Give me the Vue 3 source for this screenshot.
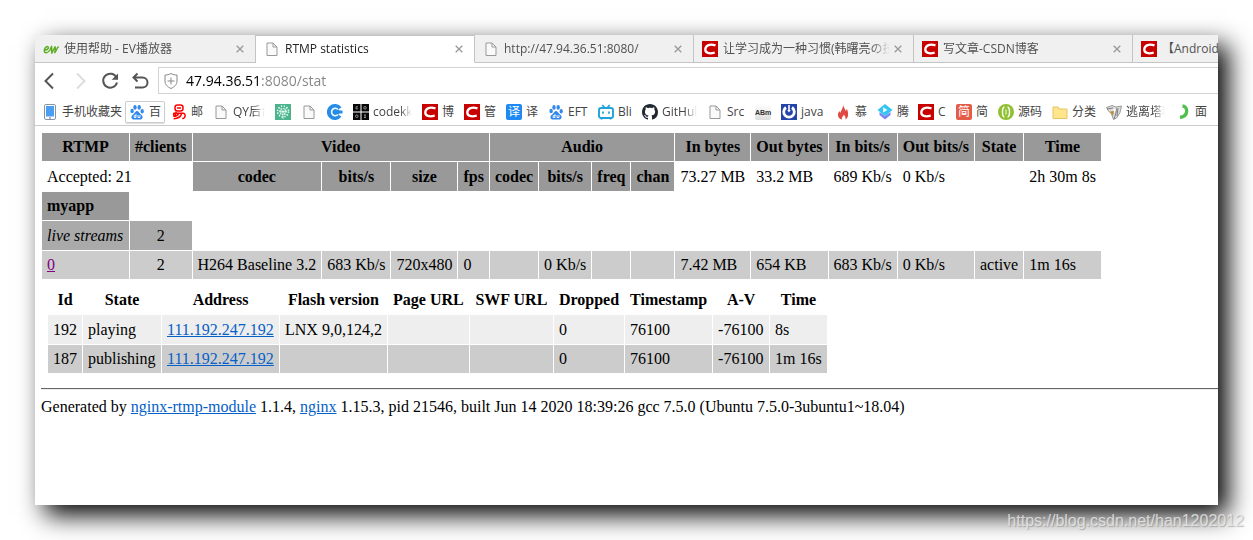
<script setup>
const tabs = [
  { icon: 'ev', title: '使用帮助 - EV播放器' },
  { icon: 'page', title: 'RTMP statistics', active: true },
  { icon: 'page', title: 'http://47.94.36.51:8080/' },
  { icon: 'csdn', title: '让学习成为一种习惯(韩曙亮の技术' },
  { icon: 'csdn', title: '写文章-CSDN博客' },
  { icon: 'csdn', title: '【Android 开发' },
]

const bookmarks = [
  { icon: 'phone', text: '手机收藏夹', width: 60 },
  { icon: 'paw', text: '百', width: 12, boxed: true },
  { icon: 'netease', text: '邮', width: 12 },
  { icon: 'page', text: 'QY后台', width: 32, fade: true },
  { icon: 'dandelion', label: 'Dandelion' },
  { icon: 'page', label: 'Page' },
  { icon: 'bluec', label: 'C' },
  { icon: 'codek', text: 'codekk', width: 39, fade: true },
  { icon: 'csdn', text: '博', width: 12 },
  { icon: 'csdn', text: '管', width: 12 },
  { tile: '译', kind: 'blue', text: '译', width: 12 },
  { icon: 'paw', text: 'EFT', width: 20 },
  { icon: 'bili', text: 'Bli', width: 14 },
  { icon: 'github', text: 'GitHub', width: 35, fade: true },
  { icon: 'page', text: 'Src', width: 18 },
  { tile: 'ABm', kind: 'grey' },
  { icon: 'java', text: 'java', width: 24 },
  { icon: 'fire', text: '慕', width: 12 },
  { icon: 'cloud', text: '腾', width: 11 },
  { icon: 'csdn', text: 'C', width: 8 },
  { tile: '简', kind: 'red', text: '简', width: 12 },
  { icon: 'source', text: '源码', width: 24 },
  { icon: 'folder', text: '分类', width: 24 },
  { icon: 'bird', text: '逃离塔科', width: 39, fade: true },
  { icon: 'hook', text: '面', width: 12 },
  { icon: 'block', label: 'More' },
]

const subHeads = ['codec', 'bits/s', 'size', 'fps', 'codec', 'bits/s', 'freq', 'chan']
const totals = ['73.27 MB', '33.2 MB', '689 Kb/s', '0 Kb/s', '', '2h 30m 8s']
const stream = ['H264 Baseline 3.2', '683 Kb/s', '720x480', '0', '', '0 Kb/s', '', '', '7.42 MB', '654 KB', '683 Kb/s', '0 Kb/s', 'active', '1m 16s']
const clientHeads = [
  { text: 'Id', width: 24 },
  { text: 'State', width: 68 },
  { text: 'Address', width: 107 },
  { text: 'Flash version', width: 96 },
  { text: 'Page URL', width: 71 },
  { text: 'SWF URL', width: 73 },
  { text: 'Dropped', width: 60 },
  { text: 'Timestamp', width: 77 },
  { text: 'A-V', width: 46 },
  { text: 'Time', width: 46 },
]
const clients = [
  { id: '192', state: 'playing', ip: '111.192.247.192', rest: ['LNX 9,0,124,2', '', '', '0', '76100', '-76100', '8s'] },
  { id: '187', state: 'publishing', ip: '111.192.247.192', rest: ['', '', '', '0', '76100', '-76100', '1m 16s'] },
]
</script>

<template>
  <svg class="defs" aria-hidden="true">
    <symbol id="ev" viewBox="0 0 16 16">
      <path d="M.7 9c3 .2 5-1.200 4.700-2.700C4.900 4.600 1.800 6 1.300 9.300c-.3 3.700 3.700 3 5.700-.3L8.600 5.300 8.800 12.300 12 5.700c.5 2 .3 4.400-.3 6C13.500 10 13.500 7 15.700 5.700" fill="none" stroke="#58ab1d" stroke-width="1.400" stroke-linejoin="round" />
    </symbol>
    <symbol id="page" viewBox="0 0 16 16">
      <path d="M3 2h6l4 4v8.500H3z" fill="#fafafa" stroke="#999" />
      <path d="M9 2v4h4" fill="none" stroke="#999" />
    </symbol>
    <symbol id="csdn" viewBox="0 0 16 16">
      <path d="M0 0h16v16H0z" fill="#c70000" />
      <path d="M13.500 4.400C8 2.600 3.700 4 3.300 8.200c-.3 4 4 4.800 9.400 3.500" fill="none" stroke="#fff" stroke-width="2.300" />
    </symbol>
    <symbol id="phone" viewBox="0 0 16 16">
      <rect x="2.500" y=".5" width="11" height="15" rx="1.500" fill="#fff" stroke="#8595a8" />
      <path d="M4 2h8v10.500H4z" fill="#4b9ff0" />
      <path d="M7 14h2" stroke="#667" />
    </symbol>
    <symbol id="paw" viewBox="0 0 16 16">
      <g fill="#3388ee">
        <ellipse cx="3.100" cy="7" rx="1.700" ry="2.300" />
        <ellipse cx="6" cy="3.400" rx="1.700" ry="2.400" />
        <ellipse cx="10.200" cy="3.400" rx="1.700" ry="2.400" />
        <ellipse cx="13.200" cy="7.200" rx="1.600" ry="2.300" />
        <path d="M8 7c1.500 0 2 1.500 3.200 2.700 1.500 1.300 2.800 2 2.300 4-.5 2.200-2.900 1.700-5.500 1.700s-5 .5-5.500-1.700c-.4-2 1-2.700 2.400-4C6.100 8.500 6.500 7 8 7z" />
      </g>
      <path d="M7 10v3.500H5.200v-1.800H7M9 11v2.500h2V11" fill="none" stroke="#fff" stroke-width=".9" />
    </symbol>
    <symbol id="netease" viewBox="0 0 16 16">
      <g fill="none" stroke="#f00" stroke-width="1.500">
        <rect x="4" y="1" width="8" height="6" rx="2.500" />
        <path d="M6 4h4M5 7.500v1.500M2.500 9.300h9.500c3.300 0 2.500 5.500-.8 5.200M3 9.300c-1.500 1.700 1 2.200 2 .8M7.500 9.500c-.5 2-3 2.800-5.300 2.800M10.600 9.500c-.6 3.200-3.500 5-8 5.200" />
      </g>
    </symbol>
    <symbol id="dandelion" viewBox="0 0 16 16">
      <path d="M0 0h16v16H0z" fill="#4bb48c" />
      <circle cx="8" cy="7.500" r="5.500" fill="none" stroke="#e8fff5" stroke-width="1.500" stroke-dasharray="1.400 1.480" />
      <circle cx="8" cy="7.500" r="3" fill="none" stroke="#e8fff5" stroke-width="1.300" stroke-dasharray="1.200 1.156" />
      <path d="M8 8v7M4.500 4l7 7M11.500 4l-7 7M4 7.500h8" stroke="#fff" stroke-width=".7" />
    </symbol>
    <symbol id="bluec" viewBox="0 0 16 16">
      <path d="M14.500 3.500A8 8 0 1 0 14.500 12.500L11 10.500A4 4 0 1 1 11 5.500z" fill="#258de8" />
      <circle cx="8" cy="8" r="4.500" fill="#258de8" />
      <path d="M8 6.500h7.500v3H8z" fill="#258de8" />
      <path d="M11 5.500A3.700 3.700 0 1 0 11 10.500" fill="none" stroke="#fff" stroke-width="1.500" />
    </symbol>
    <symbol id="codek" viewBox="0 0 16 16">
      <path d="M0 0h7.500v7.500H0zM8.500 0H16v7.500H8.500zM0 8.500h7.500V16H0zM8.500 8.500H16V16H8.500z" fill="#080808" />
      <g fill="none" stroke="#aaa" stroke-width=".8">
        <path d="M5 2.800H3v2h2" />
        <circle cx="12" cy="3.800" r="1.300" />
        <circle cx="3.800" cy="12.200" r="1.300" />
        <path d="M11 11h2M12 11v2.500M11 13.500h2" />
      </g>
    </symbol>
    <symbol id="bili" viewBox="0 0 16 16">
      <rect x="1" y="4" width="14" height="10" rx="2" fill="none" stroke="#1fa3d8" stroke-width="1.900" />
      <path d="M4.300 1 6.500 3.500M11.700 1 9.500 3.500M5 7.500v2.300M11 7.500v2.300M3.500 14.500v1M12.500 14.500v1" stroke="#1fa3d8" stroke-width="1.700" />
    </symbol>
    <symbol id="github" viewBox="0 0 16 16">
      <path fill="#202830" d="M8 0C3.580 0 0 3.580 0 8c0 3.540 2.290 6.530 5.470 7.590.4.070.55-.17.55-.38 0-.19-.01-.82-.01-1.490-2.010.37-2.530-.49-2.690-.94-.09-.23-.48-.94-.82-1.130-.28-.15-.68-.52-.01-.53.63-.01 1.080.58 1.230.82.72 1.210 1.870.87 2.330.66.070-.52.28-.87.51-1.070-1.780-.2-3.640-.89-3.640-3.950 0-.87.31-1.590.82-2.150-.08-.2-.36-1.020.08-2.120 0 0 .67-.21 2.200.82.64-.18 1.320-.27 2-.27s1.360.09 2 .27c1.530-1.040 2.200-.82 2.200-.82.44 1.100.16 1.920.08 2.120.51.56.82 1.270.82 2.150 0 3.070-1.870 3.750-3.650 3.950.29.25.54.73.54 1.480 0 1.070-.01 1.930-.01 2.200 0 .21.15.46.55.38A8.010 8.010 0 0 0 16 8c0-4.420-3.580-8-8-8z" />
    </symbol>
    <symbol id="java" viewBox="0 0 16 16">
      <path d="M0 0h16v16H0z" fill="#2444a8" />
      <path d="M5 3.500A5.300 5.300 0 1 0 11 3.500" fill="none" stroke="#fff" stroke-width="2.800" />
      <path d="M7.200 1h1.600v5h1L8 8.500 6.200 6h1z" fill="#fff" />
    </symbol>
    <symbol id="fire" viewBox="0 0 16 16">
      <path d="M8 0c.4 3.500 2 4 2.700 7l1.300-2c1.200 3 2.300 8.500-1.500 10.500.5-2.500-.8-3.200-1.500-5-1 1.800-2.500 2.500-2 5C2.500 14.500 2 10 4.500 7l.8 2C6 6 8.500 4 8 0z" fill="#e04840" />
    </symbol>
    <symbol id="cloud" viewBox="0 0 16 16">
      <path d="m2.500 8 5.500 4 5.500-4v3L8 15.500 2.500 11z" fill="#7b86f3" />
      <path d="m8 0 7.500 6L8 12 .5 6z" fill="#31c5f4" />
      <path d="m6.200 3.200 4.200 2.700-4.200 2.700z" fill="#fff" />
    </symbol>
    <symbol id="source" viewBox="0 0 16 16">
      <circle cx="8" cy="8" r="8" fill="#8fc131" />
      <path d="M6.500 3C3.800 3.500 3.800 12.500 6.500 13M9.500 3c2.700.5 2.700 9.500 0 10" fill="none" stroke="#fff" stroke-width="1.400" />
      <path d="M7.300 5.500h1.400v5H7.300z" fill="#dff0b8" />
    </symbol>
    <symbol id="folder" viewBox="0 0 16 16">
      <path d="M1 3h5l1 2h8v9.500H1z" fill="#ffe68c" stroke="#e7c461" />
    </symbol>
    <symbol id="bird" viewBox="0 0 16 16">
      <path d="M.5 3.500 6 1.500l4 1.500 5.500-1L14 8.500l-3.500 5.500-3 1.500-2-5.500L2.500 7z" fill="#ddd" stroke="#777" stroke-width=".7" />
      <path d="M1 5l6-1M8 15l2-6 .5-4.500M12 4l-1 8" fill="none" stroke="#666" stroke-width=".8" />
      <path d="M7 5h3L8.500 9z" fill="#fff" />
      <path d="M4 7.500 8 7l-1 5z" fill="#c08a35" />
    </symbol>
    <symbol id="hook" viewBox="0 0 16 16">
      <path d="M7.500 2c6 .5 6 10.500-2.500 11.500" fill="none" stroke="#4fc04c" stroke-width="3.300" />
    </symbol>
    <symbol id="block" viewBox="0 0 16 16">
      <path d="M1 5h12v6H1z" fill="#222" />
    </symbol>
    <symbol id="shield" viewBox="0 0 16 18">
      <path d="M8 1.500c2 1.200 4 1.500 6 1.500v6c0 3.800-2.800 6-6 7.500C4.800 15 2 12.800 2 9V3c2 0 4-.3 6-1.500zM8 5.500v7M4.500 9h7" fill="none" stroke="#888" />
    </symbol>
    <symbol id="close" viewBox="0 0 8 8">
      <path d="m.7.700 6.600 6.600M7.300.700.700 7.300" stroke="#999" stroke-width="1.300" />
    </symbol>
    <symbol id="back" viewBox="0 0 18 18">
      <path d="M12 1.500 4.500 9l7.500 7.500" fill="none" stroke="#555" stroke-width="2" />
    </symbol>
    <symbol id="forward" viewBox="0 0 18 18">
      <path d="M6 1.500 13.500 9 6 16.500" fill="none" stroke="#ddd" stroke-width="2" />
    </symbol>
    <symbol id="reload" viewBox="0 0 18 18">
      <path d="M15.500 5.500A7 7 0 1 0 16 10.500" fill="none" stroke="#555" stroke-width="2" />
      <path d="M17 1.500v6.300h-6.300z" fill="#555" />
    </symbol>
    <symbol id="undo" viewBox="0 0 18 18">
      <path d="M3 5.500h8.500a4.700 4.700 0 0 1 0 10H4M6.500 1.500l-4 4 4 4" fill="none" stroke="#555" stroke-width="2" />
    </symbol>
  </svg>

  <main class="desktop">
    <section class="window">
      <div class="tabs">
        <div v-for="tab in tabs" :key="tab.title" class="tab" :class="{ active: tab.active }">
          <button class="tab-main" type="button">
            <svg class="icon"><use :href="'#' + tab.icon" /></svg>
            <span class="tab-title">{{ tab.title }}</span>
          </button>
          <button class="tab-close" type="button" aria-label="Close tab">
            <svg class="cross"><use href="#close" /></svg>
          </button>
        </div>
      </div>

      <div class="toolbar">
        <button v-for="name in ['back', 'forward', 'reload', 'undo']" :key="name" class="nav" type="button" :aria-label="name">
          <svg class="nav-icon"><use :href="'#' + name" /></svg>
        </button>
        <label class="address">
          <svg class="shield"><use href="#shield" /></svg>
          <input class="url" type="text" aria-label="Address" value="47.94.36.51:8080/stat">
        </label>
      </div>

      <nav class="bookmarks">
        <a v-for="(mark, i) in bookmarks" :key="i" href="#" class="mark" :class="{ boxed: mark.boxed }" :aria-label="mark.label">
          <span v-if="mark.tile" class="tile" :class="mark.kind">{{ mark.tile }}</span>
          <svg v-else class="icon"><use :href="'#' + mark.icon" /></svg>
          <span v-if="mark.text" class="mark-text" :class="{ fade: mark.fade }" :style="{ width: mark.width + 'px' }">{{ mark.text }}</span>
        </a>
      </nav>

      <article class="page">
        <table class="stats">
          <tbody>
            <tr class="head">
              <th class="app">RTMP</th>
              <th>#clients</th>
              <th colspan="4">Video</th>
              <th colspan="4">Audio</th>
              <th>In bytes</th>
              <th>Out bytes</th>
              <th>In bits/s</th>
              <th>Out bits/s</th>
              <th>State</th>
              <th>Time</th>
            </tr>
            <tr class="head tall">
              <td colspan="2">Accepted: 21</td>
              <th v-for="(h, i) in subHeads" :key="i">{{ h }}</th>
              <td v-for="(t, i) in totals" :key="'t' + i">{{ t }}</td>
            </tr>
            <tr class="head">
              <th class="left">myapp</th>
            </tr>
            <tr class="live tall">
              <td><i>live streams</i></td>
              <td class="center">2</td>
            </tr>
            <tr class="stream">
              <td><a class="visited" href="#">0</a></td>
              <td class="center">2</td>
              <td v-for="(s, i) in stream" :key="i">{{ s }}</td>
            </tr>
            <tr>
              <td colspan="16">
                <table class="clients">
                  <tbody>
                    <tr>
                      <th v-for="h in clientHeads" :key="h.text" :style="{ width: h.width + 'px' }">{{ h.text }}</th>
                    </tr>
                    <tr v-for="(c, n) in clients" :key="c.id" :class="n === 0 ? 'light tall' : 'stream'">
                      <td>{{ c.id }}</td>
                      <td>{{ c.state }}</td>
                      <td><a href="#">{{ c.ip }}</a></td>
                      <td v-for="(r, i) in c.rest" :key="i">{{ r }}</td>
                    </tr>
                  </tbody>
                </table>
              </td>
            </tr>
          </tbody>
        </table>
        <hr>
        <p class="foot">Generated by <a href="#">nginx-rtmp-module</a> 1.1.4, <a href="#">nginx</a> 1.15.3, pid 21546, built Jun 14 2020 18:39:26 gcc 7.5.0 (Ubuntu 7.5.0-3ubuntu1~18.04)</p>
      </article>
    </section>
    <div class="watermark">https://blog.csdn.net/han1202012</div>
  </main>
</template>

<style>
body {
  background: #fff;
}
</style>

<style scoped>
.defs {
  position: absolute;
  width: 0;
  height: 0;
}
.desktop {
  position: relative;
  display: flex;
  box-sizing: border-box;
  min-height: 100vh;
  padding: 35px;
  overflow: hidden;
}
.window {
  flex: 1;
  min-width: 0;
  background: #fff;
  box-shadow: 10px 10px 24px #000;
  font-family: 'Open Sans', 'Noto Sans CJK SC', sans-serif;
  font-size: 12px;
  color: #505050;
}
button {
  padding: 0;
  border: 0;
  background: none;
  font: inherit;
  color: inherit;
}
.icon {
  flex: none;
  width: 16px;
  height: 16px;
}
.tile {
  flex: none;
  width: 16px;
  height: 16px;
  border-radius: 2px;
  font-size: 12px;
  line-height: 16px;
  text-align: center;
  color: #fff;
}
.tile.blue {
  background: #1e88f5;
}
.tile.red {
  background: #e45c48;
}
.tile.grey {
  background: linear-gradient(#fff, #ddd);
  font: 700 7px/18px 'Liberation Sans', sans-serif;
  color: #333;
}
.tabs {
  display: grid;
  grid-template-columns: 221px 219px 219px 220px 219px 1fr;
  height: 28px;
  background: #f0f0f0;
  overflow: hidden;
}
.tab {
  display: flex;
  align-items: center;
  min-width: 0;
  padding: 0 11px 0 8px;
  border-right: 1px solid #c4c4c4;
  border-bottom: 1px solid #c4c4c4;
  overflow: hidden;
}
.tab:last-child {
  padding-right: 0;
  border-right: 0;
}
.tab:last-child .tab-close {
  display: none;
}
.tab.active {
  background: #fff;
  border-bottom-color: #fff;
  border-top: 1px solid #c4c4c4;
}
.tab-main {
  display: flex;
  flex: 1;
  align-items: center;
  gap: 5px;
  min-width: 0;
  overflow: hidden;
}
.tab-title {
  flex: 1;
  text-align: left;
  line-height: 20px;
  white-space: nowrap;
  overflow: hidden;
  mask-image: linear-gradient(to left, transparent, #000 20px);
}
.tab:last-child .tab-title {
  mask-image: none;
}
.tab.active .tab-title {
  color: #222;
}
.tab-close {
  display: flex;
  margin-left: 4px;
}
.cross {
  width: 8px;
  height: 8px;
}
.toolbar {
  display: flex;
  align-items: center;
  height: 35px;
}
.nav {
  display: flex;
  justify-content: center;
  width: 30px;
}
.nav-icon {
  width: 18px;
  height: 18px;
}
.address {
  display: flex;
  flex: 1;
  align-items: center;
  gap: 7px;
  height: 25px;
  margin-left: 3px;
  padding-left: 4px;
  border: 1px solid #d4d4d4;
  border-right: 0;
}
.shield {
  width: 16px;
  height: 18px;
}
.url {
  flex: 1;
  min-width: 0;
  padding: 0;
  border: 0;
  outline: 0;
  background: linear-gradient(to right, #000 74px, #858585 74px);
  background-clip: text;
  color: transparent;
  font: 14px 'Open Sans', 'Noto Sans CJK SC', sans-serif;
}
.bookmarks {
  display: flex;
  align-items: center;
  gap: 10px;
  height: 27px;
  padding-left: 7px;
  border-bottom: 1px solid #c9cccc;
  overflow: hidden;
}
.mark {
  display: flex;
  flex: none;
  align-items: center;
  gap: 4px;
  height: 20px;
  color: #444;
  text-decoration: none;
}
.mark.boxed {
  margin: 0 -4px 0 -7px;
  padding: 0 3px;
  border: 1px solid #ccc;
  border-radius: 2px;
  box-shadow: 0 1px 1px #ddd;
}
.mark-text {
  line-height: 20px;
  white-space: nowrap;
}
.mark-text.fade {
  overflow: hidden;
  mask-image: linear-gradient(to left, transparent, #000 12px);
}
.page {
  padding: 6px 0 0 6px;
  font: 16px/18px 'Liberation Serif', serif;
  color: #000;
}
table {
  border-collapse: separate;
  border-spacing: 1px;
}
th,
td {
  height: 18px;
  padding: 5px;
  white-space: nowrap;
}
td {
  text-align: left;
}
.tall > th,
.tall > td {
  height: 19px;
}
.head > th {
  background: #999;
}
.live > td {
  background: #aaa;
}
.stream > td {
  background: #ccc;
}
.light > td {
  background: #eee;
}
.app {
  width: 77px;
}
.left {
  text-align: left;
}
.center {
  text-align: center;
}
.clients th {
  text-align: center;
}
.page a {
  color: #0560c8;
}
.page a.visited {
  color: #800080;
}
hr {
  margin: 8px 0;
  border: 0;
  border-top: 1px solid #666;
  border-bottom: 1px solid #eee;
}
.foot {
  margin: 0;
}
.watermark {
  position: absolute;
  right: 9px;
  bottom: 9px;
  font: 16px/20px 'Liberation Sans', sans-serif;
  color: rgba(235, 235, 235, 0.8);
  text-shadow: 1px 1px 1px rgba(100, 100, 100, 0.4);
}
</style>
